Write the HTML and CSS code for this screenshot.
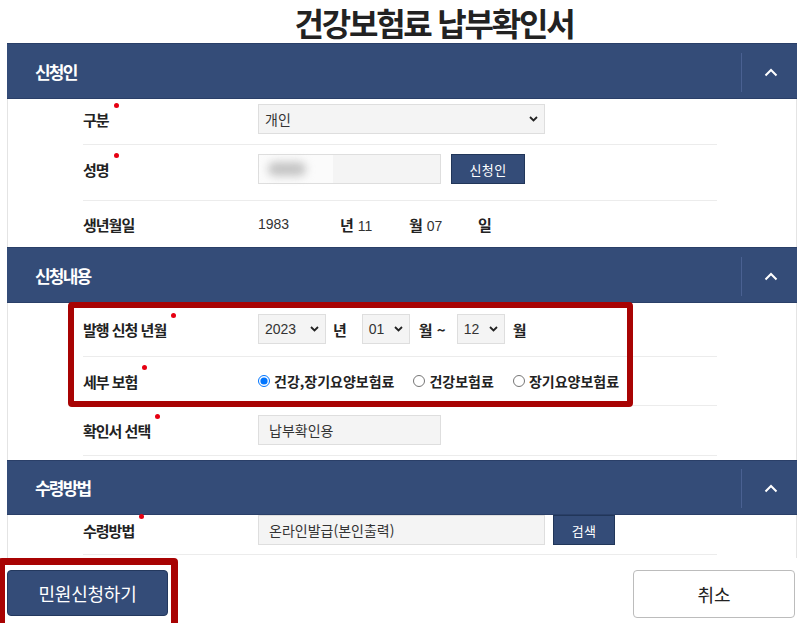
FILE: index.html
```html
<!DOCTYPE html>
<html lang="ko">
<head>
<meta charset="utf-8">
<title>건강보험료 납부확인서</title>
<link rel="stylesheet" href="styles.css">
</head>
<body>
<div class="page">
  <h1 class="title">건강보험료 납부확인서</h1>
  <div class="panel">
    <div class="sec-head">
      <span class="sec-title">신청인</span>
      <span class="toggle"><svg width="14" height="9" viewBox="0 0 14 9"><polyline points="1.5,7.5 7,2 12.5,7.5" fill="none" stroke="#fff" stroke-width="2"/></svg></span>
    </div>
    <div class="sec-body">
      <div class="row r1">
        <span class="label"><span class="t req">구분</span></span>
        <div class="select w-wide"><span>개인</span><svg width="9" height="6" viewBox="0 0 9 6"><polyline points="1,1 4.5,4.5 8,1" fill="none" stroke="#222" stroke-width="1.8"/></svg></div>
      </div>
      <div class="row r2">
        <span class="label"><span class="t req">성명</span></span>
        <div class="input w-mid"><span class="blur-box"><span class="blur-blob"></span></span></div>
        <button class="btn-small w-applicant">신청인</button>
      </div>
      <div class="row r3 noline">
        <span class="label"><span class="t">생년월일</span></span>
        <span class="cell c1">1983</span>
        <span class="cell c2"><b>년</b> 11</span>
        <span class="cell c2"><b>월</b> 07</span>
        <span class="cell"><b>일</b></span>
      </div>
    </div>

    <div class="sec-head">
      <span class="sec-title">신청내용</span>
      <span class="toggle"><svg width="14" height="9" viewBox="0 0 14 9"><polyline points="1.5,7.5 7,2 12.5,7.5" fill="none" stroke="#fff" stroke-width="2"/></svg></span>
    </div>
    <div class="sec-body">
      <div class="row r4">
        <span class="label"><span class="t req">발행 신청 년월</span></span>
        <div class="select w-year"><span>2023</span><svg width="9" height="6" viewBox="0 0 9 6"><polyline points="1,1 4.5,4.5 8,1" fill="none" stroke="#222" stroke-width="1.8"/></svg></div>
        <b class="unit u-year">년</b>
        <div class="select w-month"><span>01</span><svg width="9" height="6" viewBox="0 0 9 6"><polyline points="1,1 4.5,4.5 8,1" fill="none" stroke="#222" stroke-width="1.8"/></svg></div>
        <b class="unit u-tilde">월 ~</b>
        <div class="select w-month"><span>12</span><svg width="9" height="6" viewBox="0 0 9 6"><polyline points="1,1 4.5,4.5 8,1" fill="none" stroke="#222" stroke-width="1.8"/></svg></div>
        <b class="unit u-end">월</b>
      </div>
      <div class="row r5">
        <span class="label"><span class="t req">세부 보험</span></span>
        <label class="radio"><input type="radio" name="ins" checked><span>건강,장기요양보험료</span></label>
        <label class="radio"><input type="radio" name="ins"><span>건강보험료</span></label>
        <label class="radio"><input type="radio" name="ins"><span>장기요양보험료</span></label>
      </div>
      <div class="row r6">
        <span class="label"><span class="t req">확인서 선택</span></span>
        <div class="input w-mid"><span class="val">납부확인용</span></div>
      </div>
    </div>

    <div class="sec-head h3">
      <span class="sec-title">수령방법</span>
      <span class="toggle"><svg width="14" height="9" viewBox="0 0 14 9"><polyline points="1.5,7.5 7,2 12.5,7.5" fill="none" stroke="#fff" stroke-width="2"/></svg></span>
    </div>
    <div class="sec-body last">
      <div class="row r7">
        <span class="label"><span class="t req">수령방법</span></span>
        <div class="input w-wide"><span class="val">온라인발급(본인출력)</span></div>
        <button class="btn-small w-search">검색</button>
      </div>
    </div>
  </div>

  <div class="actions">
    <button class="btn-main">민원신청하기</button>
    <button class="btn-cancel">취소</button>
  </div>

  <div class="mark mark-form"></div>
  <div class="mark mark-submit"></div>
</div>
</body>
</html>
```

FILE: styles.css
```css
* { box-sizing: border-box; }
html, body { margin: 0; padding: 0; background: #fff; }
body {
  font-family: "Liberation Sans", "Noto Sans CJK KR", sans-serif;
  color: #222;
  width: 800px;
  height: 623px;
  overflow: hidden;
}
.page { position: relative; width: 800px; height: 623px; }

.title {
  margin: 0;
  height: 43px;
  line-height: 44px;
  padding-left: 68px;
  text-align: center;
  font-family: "Noto Sans CJK KR", sans-serif;
  font-size: 32px;
  font-weight: 700;
  letter-spacing: -2.2px;
  color: #222;
}

.panel {
  margin-left: 7px;
  width: 790px;
  border-left: 1px solid #e4e4e4;
  border-right: 1px solid #e4e4e4;
}

.sec-head {
  height: 56px;
  margin: 0 -1px;
  background: #344c78;
  border-top: 1px solid #2a3f68;
  border-bottom: 1px solid #2a3f68;
  display: flex;
  align-items: center;
  padding-left: 28px;
}
.sec-head.h3 { height: 55px; margin-top: 4px; }
.sec-title {
  flex: 1;
  color: #fff;
  font-family: "Noto Sans CJK KR", sans-serif;
  font-size: 17px;
  font-weight: 700;
  letter-spacing: -1.8px;
}
.toggle {
  width: 56px;
  height: 39px;
  border-left: 1px solid #4a6192;
  display: flex;
  align-items: center;
  justify-content: center;
  padding-left: 2px;
  margin-top: 2px;
}
.toggle svg { display: block; }

.sec-body { padding: 0 79px 0 75px; }
.sec-body.last { padding-bottom: 3px; }

.row {
  display: flex;
  align-items: center;
  border-bottom: 1px solid #ececec;
}
.row.noline { border-bottom: none; }
.r1 { padding: 5px 0 10px; }
.r2 { padding: 9px 0 16px; }
.r3 { height: 46px; }
.r4 { padding: 11px 0 12px; }
.r5 { height: 49px; }
.r6 { padding: 9px 0 10px; }
.r7 { padding: 0 0 9px; }

.label {
  width: 175px;
  flex: none;
  font-family: "Noto Sans CJK KR", sans-serif;
  font-size: 15px;
  font-weight: 700;
  letter-spacing: -1px;
  color: #222;
}
.label .t { position: relative; }
.label .t.req::after {
  content: "";
  position: absolute;
  right: -10px;
  top: -6px;
  width: 5px;
  height: 5px;
  border-radius: 50%;
  background: #e60012;
}

.select, .input {
  height: 30px;
  background: #f4f4f4;
  border: 1px solid #dedede;
  display: flex;
  align-items: center;
  justify-content: space-between;
  padding: 0 6px 0 6px;
  font-size: 14px;
  color: #333;
  flex: none;
}
.select svg { display: block; }
.w-wide { width: 287px; }
.w-mid { width: 183px; }
.w-year { width: 68px; }
.w-month { width: 48px; }
.input .val { padding-left: 4px; font-family: "Noto Sans CJK KR", sans-serif; font-size: 14px; color: #333; }
.select span { font-size: 14px; }

.blur-box {
  width: 74px;
  height: 28px;
  margin-left: -6px;
  background: #fbfbfb;
  display: flex;
  align-items: center;
  padding-left: 9px;
  margin-right: auto;
}
.blur-blob {
  width: 38px;
  height: 14px;
  border-radius: 8px;
  background: #c4c4c4;
  filter: blur(4px);
}

.btn-small {
  height: 30px;
  margin-left: 10px;
  background: #344c78;
  border: 1px solid #213659;
  color: #fff;
  font-family: "Noto Sans CJK KR", sans-serif;
  font-size: 13px;
  padding: 0;
  letter-spacing: 0.3px;
}
.w-applicant { width: 74px; }
.w-search { width: 62px; margin-left: 8px; }

.cell { font-size: 14px; color: #333; }
.cell b { font-family: "Noto Sans CJK KR", sans-serif; font-size: 15px; font-weight: 700; color: #222; }
.c1 { width: 82px; }
.c2 { width: 69px; }

.unit {
  font-family: "Noto Sans CJK KR", sans-serif;
  font-size: 15px;
  font-weight: 700;
  color: #222;
}
.u-year { margin: 0 15px 0 7px; }
.u-tilde { margin: 0 11px 0 9px; }
.u-end { margin-left: 8px; }

.radio {
  display: flex;
  align-items: center;
  font-family: "Noto Sans CJK KR", sans-serif;
  font-size: 14px;
  font-weight: 700;
  letter-spacing: 0;
  color: #222;
  margin-right: 19px;
}
.radio input {
  width: 12px;
  height: 12px;
  margin: 0 4px 0 0;
}

.actions {
  display: flex;
  justify-content: space-between;
  padding: 12px 5px 0 7px;
}
.btn-main {
  width: 161px;
  height: 46px;
  background: #344c78;
  border: 1px solid #23385e;
  border-radius: 4px;
  color: #fff;
  font-family: "Noto Sans CJK KR", sans-serif;
  font-size: 18px;
  letter-spacing: -0.2px;
  padding: 0;
}
.btn-cancel {
  width: 162px;
  height: 48px;
  background: #fff;
  border: 1px solid #bcbcbc;
  border-radius: 4px;
  color: #222;
  font-family: "Noto Sans CJK KR", sans-serif;
  font-size: 18px;
  padding: 0;
}

/* annotation overlays */
.mark {
  position: absolute;
  border: 6px solid #a80303;
  border-radius: 4px;
  pointer-events: none;
}
.mark-form { left: 68px; top: 302px; width: 565px; height: 105px; }
.mark-submit { left: -2px; top: 558px; width: 180px; height: 72px; border-width: 7px; }
```
